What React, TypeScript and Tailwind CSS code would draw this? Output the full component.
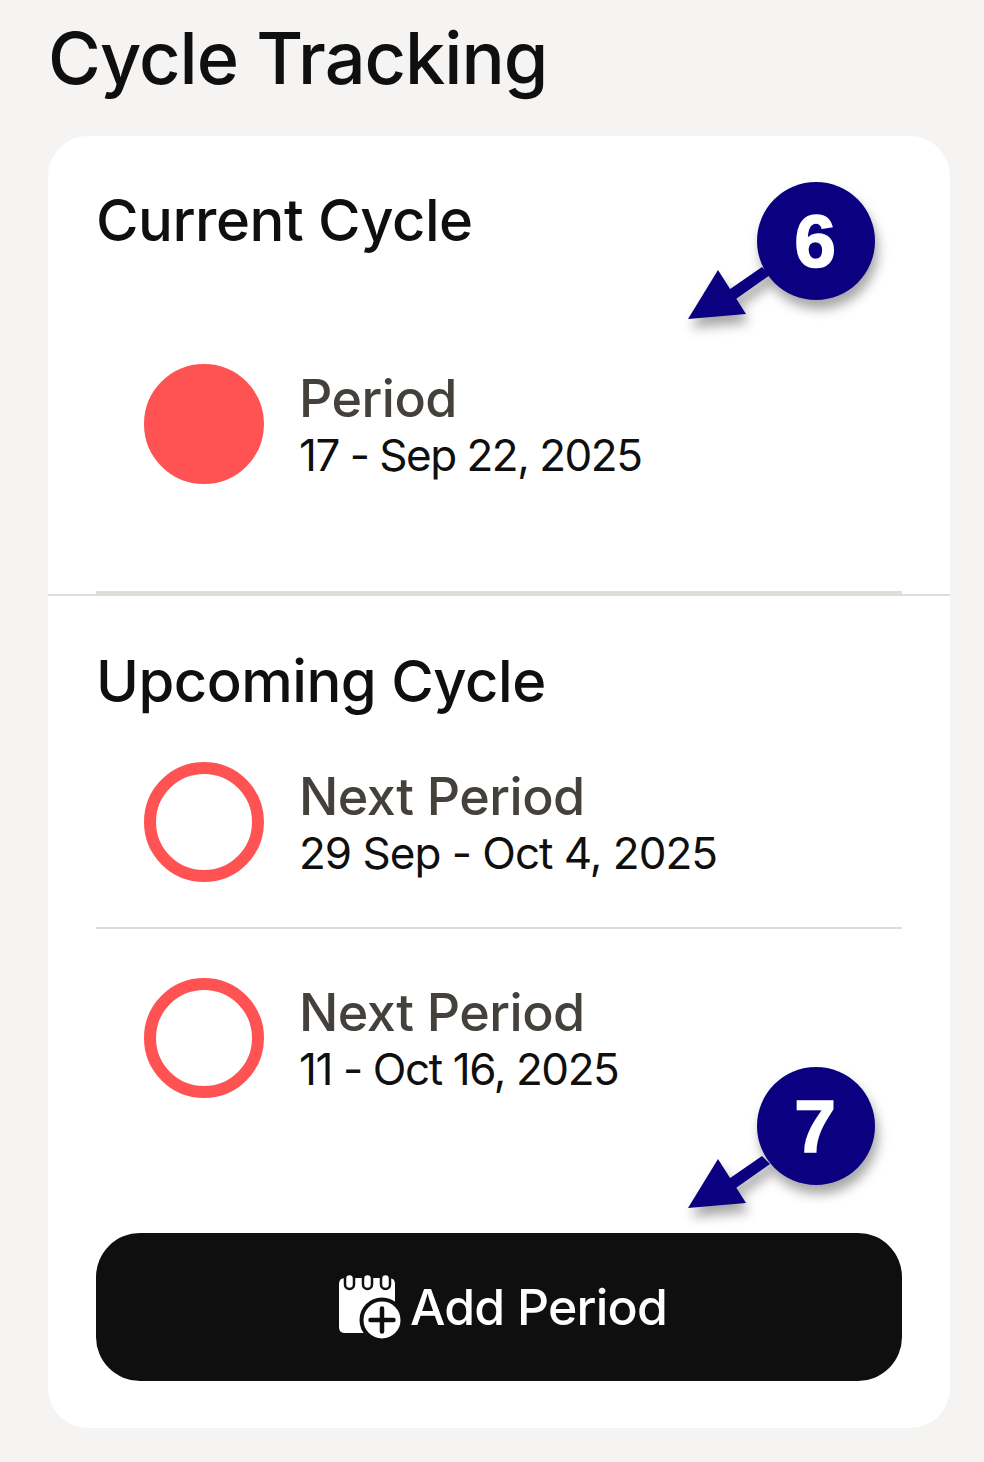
const FONT = "font-['Inter','Noto_Sans',sans-serif]";

function Badge({ value, className, cy }: { value: string; className: string; cy: number }) {
  return (
    <svg
      viewBox="0 0 210 160"
      className={`absolute w-[210px] h-[160px] drop-shadow-[3px_9px_6px_rgba(0,0,0,0.35)] ${className}`}
    >
      <path d="M40 120 L82 91 L90 99 L46 130 Z" fill="#0b0080" />
      <path d="M8 143 L38 94 L66 138 Z" fill="#0b0080" />
      <circle cx="136" cy={cy} r="59" fill="#0b0080" />
      <text
        x="135"
        y={cy + 26}
        textAnchor="middle"
        fill="#ffffff"
        stroke="#ffffff"
        strokeWidth="1.5"
        fontSize="75"
        fontWeight="700"
        fontFamily="'Liberation Sans', sans-serif"
      >
        {value}
      </text>
    </svg>
  );
}

function CycleRow({
  label,
  dates,
  filled,
  dateClass = 'tracking-[-1px]',
}: {
  label: string;
  dates: string;
  filled?: boolean;
  dateClass?: string;
}) {
  return (
    <div className="flex items-center gap-[35px] pl-[96px]">
      <div
        className={`w-[120px] h-[120px] rounded-full border-[12px] border-[#ff5252] ${filled ? 'bg-[#ff5252]' : 'bg-white'}`}
      />
      <div className="flex flex-col pt-[4px]">
        <span className="text-[52px] leading-[58px] font-medium text-[#44403c] tracking-[-0.5px]">{label}</span>
        <span className={`text-[44px] leading-[54px] text-[#0f0f0f] ${dateClass}`}>{dates}</span>
      </div>
    </div>
  );
}

function AddPeriodIcon() {
  return (
    <svg viewBox="0 0 70 70" className="w-[70px] h-[70px] shrink-0 -mt-[4px]">
      <path d="M10 8 H54 Q60 8 60 14 V57 Q60 63 54 63 H10 Q4 63 4 57 V14 Q4 8 10 8 Z" fill="#ffffff" />
      <g fill="#ffffff" stroke="#0f0f0f" strokeWidth="2.5">
        <rect x="10" y="4" width="9" height="15" rx="4.5" />
        <rect x="28" y="4" width="9" height="15" rx="4.5" />
        <rect x="46" y="4" width="9" height="15" rx="4.5" />
      </g>
      <circle cx="47" cy="50" r="20.5" fill="#ffffff" stroke="#0f0f0f" strokeWidth="4" />
      <path d="M47 38.5 V61.5 M35.5 50 H58.5" stroke="#0f0f0f" strokeWidth="4.5" strokeLinecap="round" />
    </svg>
  );
}

export default function App() {
  return (
    <div className={`w-[984px] h-[1462px] bg-[#f5f4f2] px-[48px] overflow-hidden ${FONT}`}>
      <h1 className="h-[136px] pt-[16px] text-[72px] leading-[84px] font-medium text-[#0f0f0f] tracking-[-1px]">
        Cycle Tracking
      </h1>

      <div className="relative bg-white rounded-[40px] w-[902px] h-[1292px]">
        <section className="h-[458px] pt-[48px]">
          <h2 className="h-[180px] px-[48px] text-[58px] leading-[72px] font-medium text-[#0f0f0f] tracking-[-0.5px]">
            Current Cycle
          </h2>
          <CycleRow label="Period" dates="17 - Sep 22, 2025" dateClass="tracking-[-1.5px]" filled />
        </section>

        <div className="border-t-[2px] border-[#e0ddd8]">
          <div className="mx-[48px] -mt-[5px] h-[3px] bg-[#e0ddd8]" />
        </div>

        <section className="pt-[49px]">
          <h2 className="h-[117px] px-[48px] text-[58px] leading-[72px] font-medium text-[#0f0f0f] tracking-[-0.5px]">
            Upcoming Cycle
          </h2>
          <CycleRow label="Next Period" dates="29 Sep - Oct 4, 2025" />
          <div className="mx-[48px] mt-[45px] mb-[49px] h-[2px] bg-[#dedcd8]" />
          <CycleRow label="Next Period" dates="11 - Oct 16, 2025" dateClass="tracking-[-1.4px]" />
        </section>

        <button className="mx-[48px] mt-[135px] w-[806px] h-[148px] rounded-[44px] bg-[#0f0f0f] flex items-center justify-center pl-[4px] text-white text-[50px] font-medium tracking-[-0.8px]">
          <AddPeriodIcon />
          <span className="ml-[5px] pt-[1px]">Add Period</span>
        </button>

        <Badge value="6" cy={65} className="left-[632px] top-[40px]" />
        <Badge value="7" cy={61} className="left-[632px] top-[929px]" />
      </div>
    </div>
  );
}
